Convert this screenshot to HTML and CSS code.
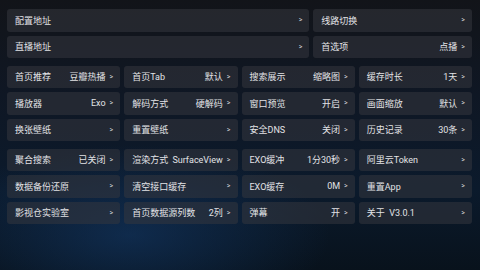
FILE: index.html
```html
<!DOCTYPE html>
<html lang="zh">
<head>
    <meta charset="UTF-8">
    <title>设置</title>
    <link rel="stylesheet" href="styles.css">
</head>
<body>
    <div class="page">
        <div class="group">
            <div class="row">
                <div class="item wide"><span class="label">配置地址</span><span class="arrow">&gt;</span></div>
                <div class="item"><span class="label">线路切换</span><span class="arrow">&gt;</span></div>
            </div>
            <div class="row">
                <div class="item wide"><span class="label">直播地址</span><span class="arrow">&gt;</span></div>
                <div class="item"><span class="label">首选项</span><span class="value">点播</span><span class="arrow">&gt;</span></div>
            </div>
        </div>

        <div class="group grid">
            <div class="item"><span class="label">首页推荐</span><span class="value">豆瓣热播</span><span class="arrow">&gt;</span></div>
            <div class="item"><span class="label">首页Tab</span><span class="value">默认</span><span class="arrow">&gt;</span></div>
            <div class="item"><span class="label">搜索展示</span><span class="value">缩略图</span><span class="arrow">&gt;</span></div>
            <div class="item"><span class="label">缓存时长</span><span class="value">1天</span><span class="arrow">&gt;</span></div>

            <div class="item"><span class="label">播放器</span><span class="value">Exo</span><span class="arrow">&gt;</span></div>
            <div class="item"><span class="label">解码方式</span><span class="value">硬解码</span><span class="arrow">&gt;</span></div>
            <div class="item"><span class="label">窗口预览</span><span class="value">开启</span><span class="arrow">&gt;</span></div>
            <div class="item"><span class="label">画面缩放</span><span class="value">默认</span><span class="arrow">&gt;</span></div>

            <div class="item"><span class="label">换张壁纸</span><span class="arrow">&gt;</span></div>
            <div class="item"><span class="label">重置壁纸</span><span class="arrow">&gt;</span></div>
            <div class="item"><span class="label">安全DNS</span><span class="value">关闭</span><span class="arrow">&gt;</span></div>
            <div class="item"><span class="label">历史记录</span><span class="value">30条</span><span class="arrow">&gt;</span></div>
        </div>

        <div class="group grid">
            <div class="item"><span class="label">聚合搜索</span><span class="value">已关闭</span><span class="arrow">&gt;</span></div>
            <div class="item"><span class="label">渲染方式</span><span class="value">SurfaceView</span><span class="arrow">&gt;</span></div>
            <div class="item"><span class="label">EXO缓冲</span><span class="value">1分30秒</span><span class="arrow">&gt;</span></div>
            <div class="item"><span class="label">阿里云Token</span><span class="arrow">&gt;</span></div>

            <div class="item"><span class="label">数据备份还原</span><span class="arrow">&gt;</span></div>
            <div class="item"><span class="label">清空接口缓存</span><span class="arrow">&gt;</span></div>
            <div class="item"><span class="label">EXO缓存</span><span class="value">0M</span><span class="arrow">&gt;</span></div>
            <div class="item"><span class="label">重置App</span><span class="arrow">&gt;</span></div>

            <div class="item"><span class="label">影视仓实验室</span><span class="arrow">&gt;</span></div>
            <div class="item"><span class="label">首页数据源列数</span><span class="value">2列</span><span class="arrow">&gt;</span></div>
            <div class="item"><span class="label">弹幕</span><span class="value">开</span><span class="arrow">&gt;</span></div>
            <div class="item"><span class="label">关于&nbsp; V3.0.1</span><span class="arrow">&gt;</span></div>
        </div>
    </div>
</body>
</html>
```

FILE: styles.css
```css
html, body {
    margin: 0;
    height: 100%;
}
body {
    font-family: Roboto, "Noto Sans CJK SC", sans-serif;
    font-size: 9px;
    color: #e2e3e6;
    background:
        radial-gradient(ellipse 200px 90px at 130px 235px, rgba(20, 60, 110, 0.55), rgba(20, 60, 110, 0) 100%),
        linear-gradient(180deg, #121419 0%, #0f1724 35%, #0b1a2c 70%, #08121c 100%);
    overflow: hidden;
}
.page {
    padding: 9px 8px 0 7px;
}
.group {
    margin-bottom: 7.5px;
}
.row {
    display: flex;
    gap: 4px;
    margin-bottom: 4px;
}
.row:last-child {
    margin-bottom: 0;
}
.row .item {
    flex: 1;
}
.row .item.wide {
    flex: 2;
}
.grid {
    display: grid;
    grid-template-columns: repeat(4, 1fr);
    column-gap: 4px;
    row-gap: 4px;
}
.item {
    display: flex;
    align-items: center;
    height: 22.5px;
    padding: 0 7px 0 8px;
    background: rgba(52, 55, 62, 0.55);
    border-radius: 3px;
    white-space: nowrap;
    box-sizing: border-box;
}
.label {
    flex: 1;
}
.value {
    margin-right: 4px;
}
.arrow {
    font-size: 7px;
    color: #d8d9dc;
}
```
